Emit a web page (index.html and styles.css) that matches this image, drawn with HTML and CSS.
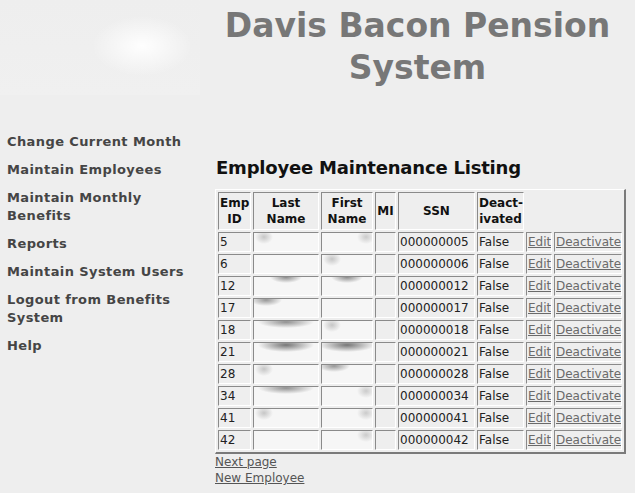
FILE: index.html
```html
<!DOCTYPE html>
<html>
<head>
<meta charset="utf-8">
<title>Davis Bacon Pension System</title>
<link rel="stylesheet" href="styles.css">
</head>
<body>
<div class="page">
  <header class="top">
    <div class="logo"></div>
    <h1 class="title">Davis Bacon Pension<br>System</h1>
  </header>
  <div class="main">
    <nav class="nav">
      <a class="nav-item" href="#">Change Current Month</a>
      <a class="nav-item" href="#">Maintain Employees</a>
      <a class="nav-item" href="#">Maintain Monthly Benefits</a>
      <a class="nav-item" href="#">Reports</a>
      <a class="nav-item" href="#">Maintain System Users</a>
      <a class="nav-item" href="#">Logout from Benefits System</a>
      <a class="nav-item" href="#">Help</a>
    </nav>
    <section class="content">
      <h2 class="heading">Employee Maintenance Listing</h2>
      <table class="grid">
        <colgroup>
          <col class="c-id"><col class="c-last"><col class="c-first"><col class="c-mi"><col class="c-ssn"><col class="c-deact"><col class="c-edit"><col class="c-link">
        </colgroup>
        <thead>
          <tr>
            <th>Emp<br>ID</th><th>Last<br>Name</th><th>First<br>Name</th><th>MI</th><th>SSN</th><th>Deact-<br>ivated</th><th class="blank"></th><th class="blank"></th>
          </tr>
        </thead>
        <tbody>
          <tr><td>5</td><td class="nm sm-l"></td><td class="nm sm-r"></td><td></td><td>000000005</td><td>False</td><td><a href="#">Edit</a></td><td><a href="#">Deactivate</a></td></tr>
          <tr><td>6</td><td class="nm"></td><td class="nm sm-l"></td><td></td><td>000000006</td><td>False</td><td><a href="#">Edit</a></td><td><a href="#">Deactivate</a></td></tr>
          <tr><td>12</td><td class="nm dk-c"></td><td class="nm dk-c"></td><td></td><td>000000012</td><td>False</td><td><a href="#">Edit</a></td><td><a href="#">Deactivate</a></td></tr>
          <tr><td>17</td><td class="nm dk-l"></td><td class="nm"></td><td></td><td>000000017</td><td>False</td><td><a href="#">Edit</a></td><td><a href="#">Deactivate</a></td></tr>
          <tr><td>18</td><td class="nm dk-band"></td><td class="nm sm-l"></td><td></td><td>000000018</td><td>False</td><td><a href="#">Edit</a></td><td><a href="#">Deactivate</a></td></tr>
          <tr><td>21</td><td class="nm dk-band2"></td><td class="nm dk-band2"></td><td></td><td>000000021</td><td>False</td><td><a href="#">Edit</a></td><td><a href="#">Deactivate</a></td></tr>
          <tr><td>28</td><td class="nm sm-l"></td><td class="nm dk-l"></td><td></td><td>000000028</td><td>False</td><td><a href="#">Edit</a></td><td><a href="#">Deactivate</a></td></tr>
          <tr><td>34</td><td class="nm dk-band"></td><td class="nm sm-r"></td><td></td><td>000000034</td><td>False</td><td><a href="#">Edit</a></td><td><a href="#">Deactivate</a></td></tr>
          <tr><td>41</td><td class="nm sm-l"></td><td class="nm sm-r"></td><td></td><td>000000041</td><td>False</td><td><a href="#">Edit</a></td><td><a href="#">Deactivate</a></td></tr>
          <tr><td>42</td><td class="nm"></td><td class="nm sm-r"></td><td></td><td>000000042</td><td>False</td><td><a href="#">Edit</a></td><td><a href="#">Deactivate</a></td></tr>
        </tbody>
      </table>
      <div class="links">
        <a href="#">Next page</a>
        <a href="#">New Employee</a>
      </div>
    </section>
  </div>
</div>
</body>
</html>
```

FILE: styles.css
```css
html, body {
  margin: 0;
  padding: 0;
  background: #eeeeee;
}

body {
  font-family: "DejaVu Sans", Verdana, sans-serif;
  color: #222;
}

.page {
  width: 635px;
  height: 493px;
  overflow: hidden;
}

.top {
  display: grid;
  grid-template-columns: 200px 1fr;
  height: 125px;
}

.logo {
  height: 95px;
  background:
    radial-gradient(ellipse 50px 30px at 142px 46px, rgba(255,255,255,0.95), rgba(255,255,255,0) 100%),
    linear-gradient(#eeeeee, #f0f0f0);
}

.title {
  margin: 0;
  padding-top: 5px;
  text-align: center;
  font-size: 33px;
  line-height: 42px;
  font-weight: bold;
  color: #777777;
}

.main {
  display: grid;
  grid-template-columns: 215px 1fr;
}

.nav {
  display: flex;
  flex-direction: column;
  gap: 10px;
  width: 198px;
  padding: 8px 0 0 7px;
}

.nav-item {
  font-size: 13px;
  line-height: 18px;
  font-weight: bold;
  color: #454545;
  text-decoration: none;
  letter-spacing: 0.4px;
}

.content {
  padding-top: 32px;
}

.heading {
  margin: 0 0 10px 1px;
  font-size: 18px;
  line-height: 22px;
  font-weight: bold;
  color: #111;
  letter-spacing: -0.2px;
}

.grid {
  table-layout: fixed;
  width: 411px;
  border-collapse: separate;
  border-spacing: 2px;
  border-style: solid;
  border-width: 1px 2px 2px 1px;
  border-color: #ffffff #7a7a7a #7a7a7a #ffffff;
  font-size: 12px;
  line-height: 16px;
}

.c-id { width: 33px; }
.c-last { width: 66px; }
.c-first { width: 52px; }
.c-mi { width: 21px; }
.c-ssn { width: 77px; }
.c-deact { width: 47px; }
.c-edit { width: 26px; }
.c-link { width: 68px; }

.grid th,
.grid td {
  border-style: solid;
  border-width: 1px;
  border-color: #8a8a8a #ffffff #ffffff #8a8a8a;
  padding: 1px;
  white-space: nowrap;
  overflow: hidden;
}

.grid th {
  padding: 2px 1px;
  font-weight: bold;
  text-align: center;
  vertical-align: middle;
  color: #111;
}

.grid th.blank {
  border-color: transparent;
}

.grid td {
  height: 16px;
  text-align: left;
  color: #222;
}

.grid td a {
  color: #6a6a6a;
  text-decoration: underline;
}

.grid td.nm {
  background: #f6f6f6;
}

.grid td.sm-l {
  background:
    radial-gradient(ellipse 9px 7px at 10px 4px, rgba(150,150,150,0.5), rgba(150,150,150,0)),
    #f6f6f6;
}

.grid td.sm-r {
  background:
    radial-gradient(ellipse 9px 7px at 44px 4px, rgba(150,150,150,0.45), rgba(150,150,150,0)),
    #f6f6f6;
}

.grid td.dk-c {
  background:
    radial-gradient(ellipse 16px 6px at 50% 0px, rgba(110,110,110,0.8), rgba(110,110,110,0)),
    #f6f6f6;
}

.grid td.dk-l {
  background:
    radial-gradient(ellipse 16px 6px at 12px 1px, rgba(110,110,110,0.7), rgba(110,110,110,0)),
    #f6f6f6;
}

.grid td.dk-band {
  background:
    radial-gradient(ellipse 28px 6px at 50% 1px, rgba(110,110,110,0.75), rgba(110,110,110,0)),
    #f6f6f6;
}

.grid td.dk-band2 {
  background:
    radial-gradient(ellipse 28px 7px at 50% 2px, rgba(95,95,95,0.85), rgba(95,95,95,0)),
    #f6f6f6;
}

.links {
  display: flex;
  flex-direction: column;
  align-items: flex-start;
  font-size: 12px;
  line-height: 16px;
}

.links a {
  color: #555;
  text-decoration: underline;
}
```
